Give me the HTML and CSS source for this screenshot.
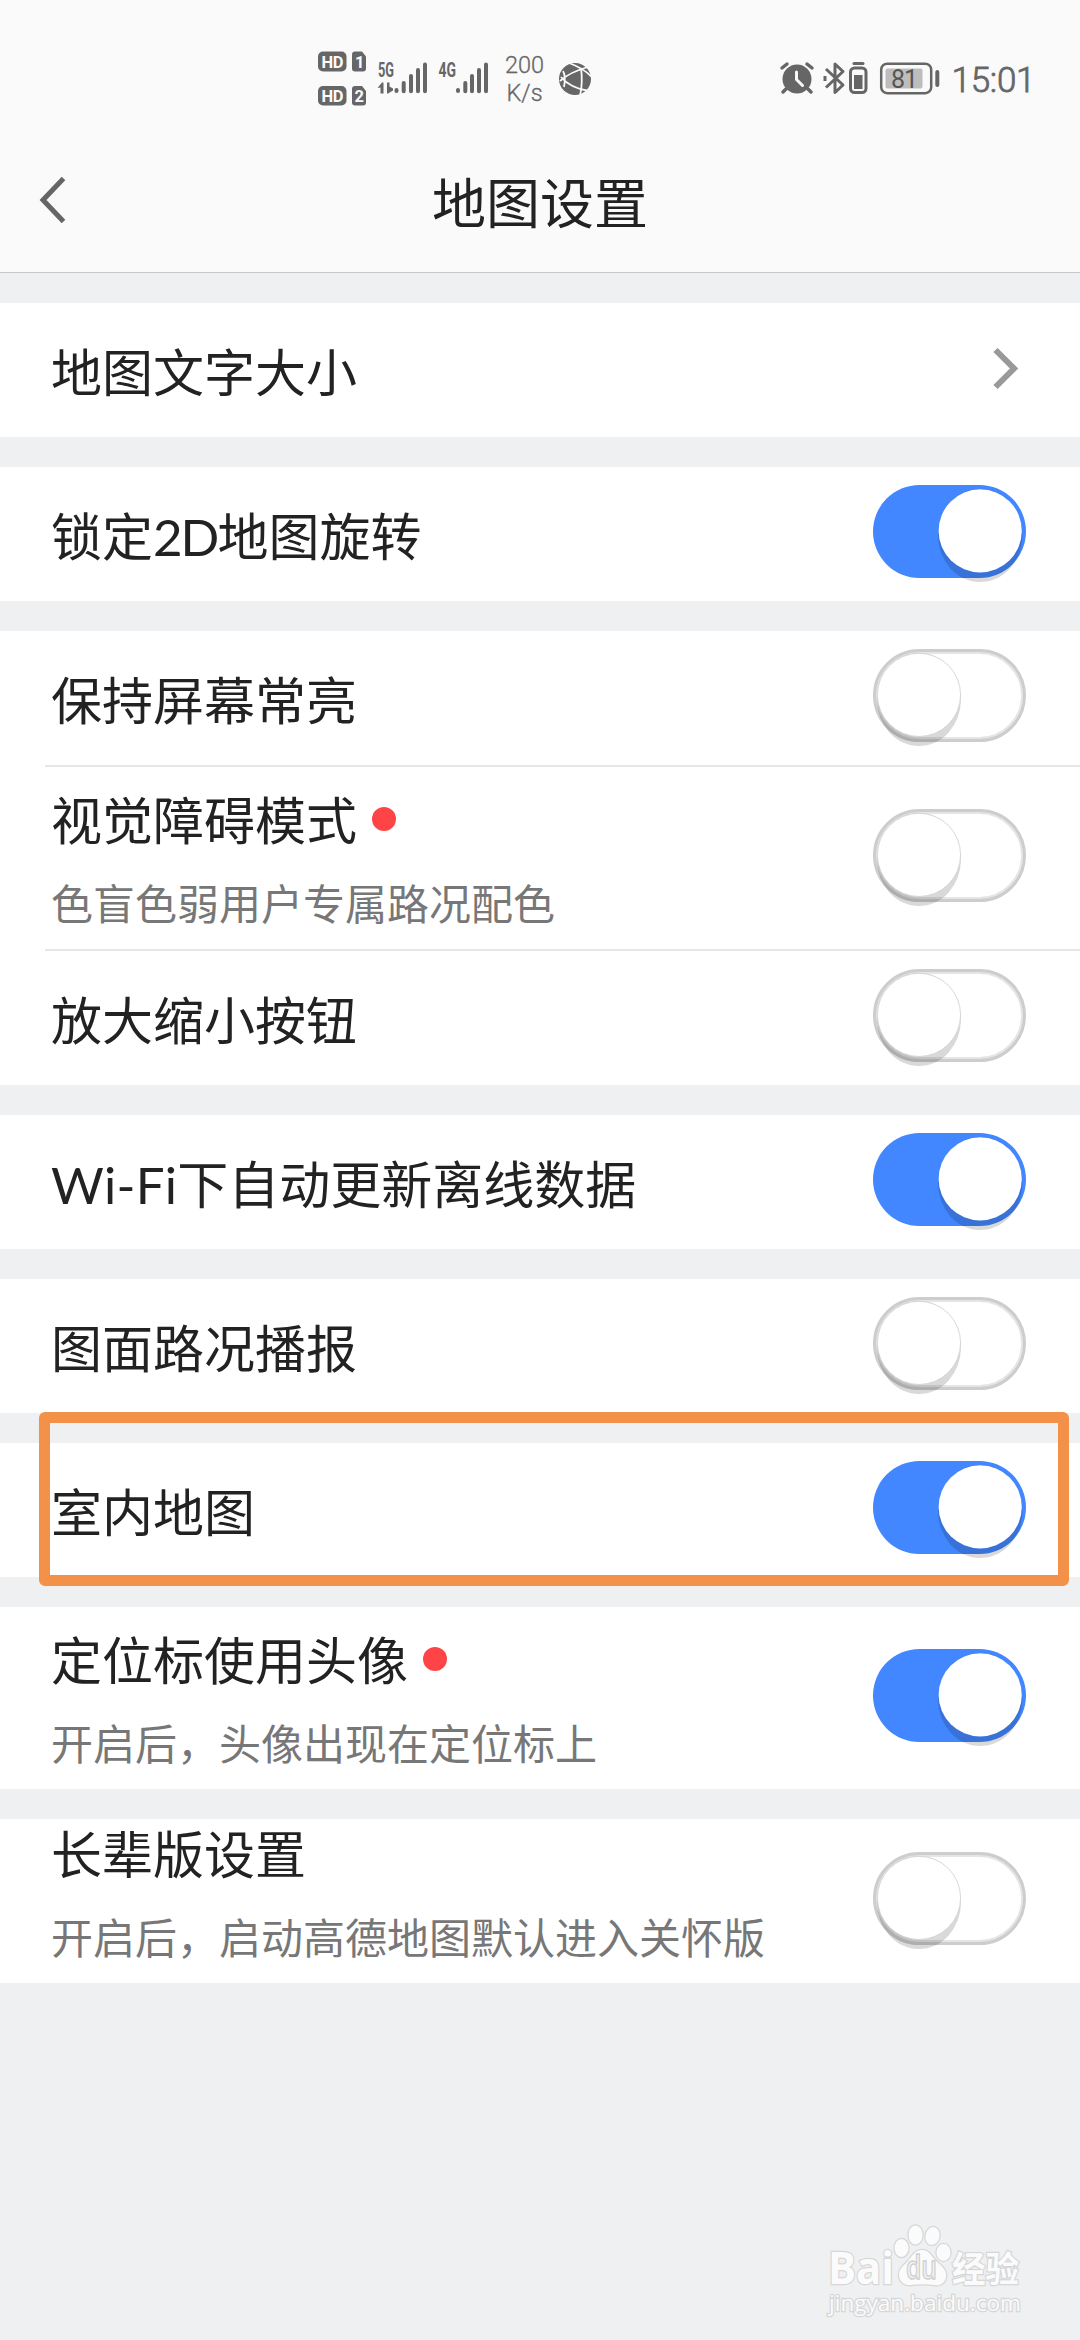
FILE: index.html
```html
<!DOCTYPE html>
<html lang="zh-CN">
<head>
<meta charset="utf-8">
<title>地图设置</title>
<link rel="stylesheet" href="styles.css">
</head>
<body>
<svg width="0" height="0" class="defs">
  <symbol id="on" viewBox="0 0 153 97">
    <rect width="153" height="93" rx="46.5" fill="#4287ff"/>
    <ellipse cx="107.2" cy="50.5" rx="42.2" ry="46.5" fill="#000" fill-opacity=".15"/>
    <circle cx="107.2" cy="45.9" r="41.6" fill="#fff"/>
  </symbol>
  <symbol id="off" viewBox="0 0 153 97">
    <rect x="3.5" y="3.5" width="146" height="86" rx="43" fill="#fff" stroke="#e5e5e5" stroke-width="3"/>
    <rect x="1.5" y="1.5" width="150" height="90" rx="45" fill="none" stroke="#cdcdcd" stroke-width="3"/>
    <ellipse cx="46" cy="50.5" rx="42" ry="46.5" fill="#000" fill-opacity=".15"/>
    <circle cx="46" cy="45.9" r="41.6" fill="#fff" stroke="#d4d4d4" stroke-width=".9"/>
  </symbol>
</svg>
<header class="top">
  <div class="status">
    <svg class="status-left" width="300" height="80" viewBox="300 40 300 80" fill="#666">
      <rect x="318" y="51.5" width="28.5" height="20" rx="5"/>
      <path d="M355 51.500h7l4 5v12a3 3 0 0 1-3 3h-8a3 3 0 0 1-3-3v-14a3 3 0 0 1 3-3z"/>
      <rect x="318" y="86" width="28.500" height="19.500" rx="5"/>
      <path d="M355 86h7l4 5v11.500a3 3 0 0 1-3 3h-8a3 3 0 0 1-3-3v-13.500a3 3 0 0 1 3-3z"/>
      <g class="badge" fill="#fafafa">
        <text x="321.500" y="67.500" textLength="22">HD</text><text x="355" y="67.500">1</text>
        <text x="321.500" y="101.500" textLength="22">HD</text><text x="354.500" y="101.500">2</text>
      </g>
      <text class="net" x="378" y="76.500" textLength="16" lengthAdjust="spacingAndGlyphs">5G</text>
      <text class="net" x="438.500" y="76.500" textLength="17.500" lengthAdjust="spacingAndGlyphs">4G</text>
      <path d="M377.500 88l4.500-5.500h1.500v11h-3v-6zM387 82.500h2.500v4l3.500 2v2l-5 3h-1z"/>
      <g stroke="#666" stroke-width="4" stroke-linecap="round">
        <path d="M396.500 90v1M403.700 83v8.300M411 76v15.300M418 70v21.300M425 64.500v26.800"/>
        <path d="M458 90v1M465.300 83v8.300M472 76v15.300M479 70v21.300M486 64.500v26.800"/>
      </g>
      <text class="speed" x="524.500" y="73">200</text>
      <text class="speed" x="524.500" y="100.500">K/s</text>
      <circle cx="575" cy="79" r="16"/>
      <path d="M560 81Q570 72 588 67M561 77Q570 88 589 91M569 63Q583 68 592 77M581 68Q583 82 580 96M563 71q3 5 1 16" fill="none" stroke="#fafafa" stroke-width="1.800"/>
    </svg>
    <svg class="status-right" width="280" height="80" viewBox="770 40 280 80" fill="none" stroke="#666">
      <circle cx="797" cy="79" r="14.500" fill="#666" stroke="none"/>
      <path d="M782 68l5-4M812 68l-5-4M786 89l-3 3M808 89l3 3" stroke-width="3.500" stroke-linecap="round"/>
      <path d="M796.500 72v7.500l6 6" stroke="#fafafa" stroke-width="3" stroke-linecap="round"/>
      <path d="M826 69l17 16-8 7.500v-28.500l8 7.500-17 16M825 76v5" stroke-width="3" stroke-linejoin="round"/>
      <rect x="850.500" y="68" width="15.500" height="24.500" rx="4" stroke-width="3"/>
      <path d="M854 63.500h9" stroke-width="3" stroke-linecap="round"/>
      <rect x="854" y="75" width="8.500" height="14" fill="#666" stroke="none"/>
      <rect x="881.200" y="63.700" width="50" height="29.500" rx="6" stroke-width="2.500"/>
      <rect x="885.500" y="68.500" width="37" height="20" rx="2" fill="#bdbdbd" stroke="none"/>
      <path d="M937.300 72v13" stroke-width="4" stroke-linecap="round"/>
      <g fill="#555" stroke="none">
        <text class="percent" x="891" y="87.500" textLength="27">81</text>
      </g>
      <g fill="#666">
        <text class="clock" x="951.500" y="92" textLength="84">15:01</text>
      </g>
    </svg>
  </div>
  <div class="nav">
    <svg class="back" width="32" height="50" viewBox="0 0 32 50"><path d="M28.500 3.500L8 25l20.500 21.500" fill="none" stroke="#666" stroke-width="5"/></svg>
    <h1>地图设置</h1>
  </div>
</header>
<main>
  <section><div class="row"><span class="label">地图文字大小</span>
    <svg class="chevron" width="30" height="46" viewBox="0 0 30 46"><path d="M3.500 4L22 22.500 3.500 41" fill="none" stroke="#999" stroke-width="6"/></svg></div></section>
  <section><div class="row"><span class="label">锁定<b class="tight">2D</b>地图旋转</span><svg class="toggle"><use href="#on"/></svg></div></section>
  <section>
    <div class="row"><span class="label">保持屏幕常亮</span><svg class="toggle"><use href="#off"/></svg></div>
    <hr>
    <div class="row double"><div><p class="label">视觉障碍模式<i class="dot"></i></p><p class="sub">色盲色弱用户专属路况配色</p></div><svg class="toggle"><use href="#off"/></svg></div>
    <hr>
    <div class="row"><span class="label">放大缩小按钮</span><svg class="toggle"><use href="#off"/></svg></div>
  </section>
  <section><div class="row"><span class="label"><b class="wide">Wi-Fi</b>下自动更新离线数据</span><svg class="toggle"><use href="#on"/></svg></div></section>
  <section><div class="row"><span class="label">图面路况播报</span><svg class="toggle"><use href="#off"/></svg></div></section>
  <section class="marked"><div class="row"><span class="label">室内地图</span><svg class="toggle"><use href="#on"/></svg></div></section>
  <section><div class="row double"><div><p class="label">定位标使用头像<i class="dot"></i></p><p class="sub">开启后，头像出现在定位标上</p></div><svg class="toggle"><use href="#on"/></svg></div></section>
  <section><div class="row double compact"><div><p class="label">长辈版设置</p><p class="sub">开启后，启动高德地图默认进入关怀版</p></div><svg class="toggle"><use href="#off"/></svg></div></section>
</main>
<svg class="watermark" width="220" height="110" viewBox="820 2215 220 110" fill="#fbfbfb" stroke="#d6d7d8" stroke-width="2.500" paint-order="stroke">
  <text class="wm-bai" x="828" y="2284" textLength="66" lengthAdjust="spacingAndGlyphs">Bai</text>
  <ellipse cx="901.500" cy="2248" rx="7" ry="9"/><ellipse cx="915.500" cy="2235" rx="7" ry="9.500"/>
  <ellipse cx="932.500" cy="2236" rx="7" ry="9" transform="rotate(12 932.500 2236)"/><ellipse cx="943.500" cy="2252.500" rx="7" ry="8.500"/>
  <path d="M922 2250c8 0 10 8 15 12 5 4 10 8 9 15-1 7-7 9-12 8-8-1-15-1-23 0-7 1-12-4-12-10 0-6 4-9 8-13 5-5 7-12 15-12z"/>
  <text class="wm-du" x="906" y="2279" textLength="31" lengthAdjust="spacingAndGlyphs">du</text>
  <text class="wm-cn" x="952" y="2282" textLength="67" lengthAdjust="spacingAndGlyphs">经验</text>
  <text class="wm-url" x="829" y="2310.500" textLength="192" lengthAdjust="spacingAndGlyphs">jingyan.baidu.com</text>
</svg>
</body>
</html>
```
FILE: styles.css
```css
*, *::after { box-sizing: border-box; margin: 0; padding: 0; }
body {
  position: relative;
  width: 1080px;
  height: 2340px;
  overflow: hidden;
  background: #eff0f2;
  color: #222;
  font-family: Roboto, "Noto Sans CJK SC", sans-serif;
}
.defs { position: absolute; }
.top { height: 273px; background: #fafafa; border-bottom: 1px solid #c8c8c8; }
.status {
  display: flex;
  justify-content: space-between;
  height: 120px;
  padding: 40px 30px 0 300px;
}
.nav {
  display: grid;
  grid-template-columns: 120px 1fr 120px;
  align-items: center;
  height: 152px;
  padding-top: 8px;
}
.back { margin-left: 35px; }
h1 { padding-top: 12px; font-size: 54px; font-weight: 400; line-height: 80px; text-align: center; }
.badge { font: 700 16.500px Roboto, sans-serif; }
.net { font: 700 20px Roboto, sans-serif; }
.speed { font: 300 23.500px Roboto, sans-serif; text-anchor: middle; stroke: #666; stroke-width: .3px; }
.percent { font: 400 25px Roboto, sans-serif; }
.clock { font: 300 35px Roboto, sans-serif; stroke-width: .8px; }
main { display: flex; flex-direction: column; gap: 30px; padding-top: 30px; }
section { position: relative; background: #fff; }
.row {
  display: flex;
  align-items: center;
  justify-content: space-between;
  height: 134px;
  padding: 0 54px 0 51px;
}
.label { display: block; font-size: 51px; line-height: 74px; white-space: nowrap; }
span.label { padding-top: 9px; }
.label b { font-family: Lato, sans-serif; font-weight: 400; line-height: 1; }
.wide { letter-spacing: .3px; }
.tight { letter-spacing: -2px; }
.sub { margin-top: 15px; font-size: 42px; line-height: 62px; color: #777; white-space: nowrap; }
.double { height: 182px; }
.double > div { padding-top: 6px; }
.compact { height: 164px; }
.compact > div { padding: 0 0 12px; }
.toggle { flex: none; width: 153px; height: 97px; margin-bottom: 1px; }
.chevron { margin: 0 4px 2px 0; }
.dot {
  display: inline-block;
  width: 24px;
  height: 24px;
  margin-left: 15px;
  border-radius: 50%;
  background: #ff4447;
  vertical-align: 9px;
}
hr { height: 2px; margin-left: 45px; border: 0; background: #e6e6e6; }
.marked::after {
  content: "";
  position: absolute;
  z-index: 1;
  top: -31px;
  left: 39px;
  width: 1030px;
  height: 174px;
  border: 11px solid #f39149;
  border-radius: 6px;
}
.watermark { position: absolute; left: 820px; top: 2215px; }
.wm-bai { font: 700 45px "Open Sans", sans-serif; }
.wm-du { font: 600 32px "Open Sans", sans-serif; fill: #f3f3f4; stroke: #cfd0d1; stroke-width: 1.5px; paint-order: normal; }
.wm-cn { font: 700 35px "Noto Sans CJK SC", sans-serif; }
.wm-url { font: 400 22px "Open Sans", sans-serif; }
```
